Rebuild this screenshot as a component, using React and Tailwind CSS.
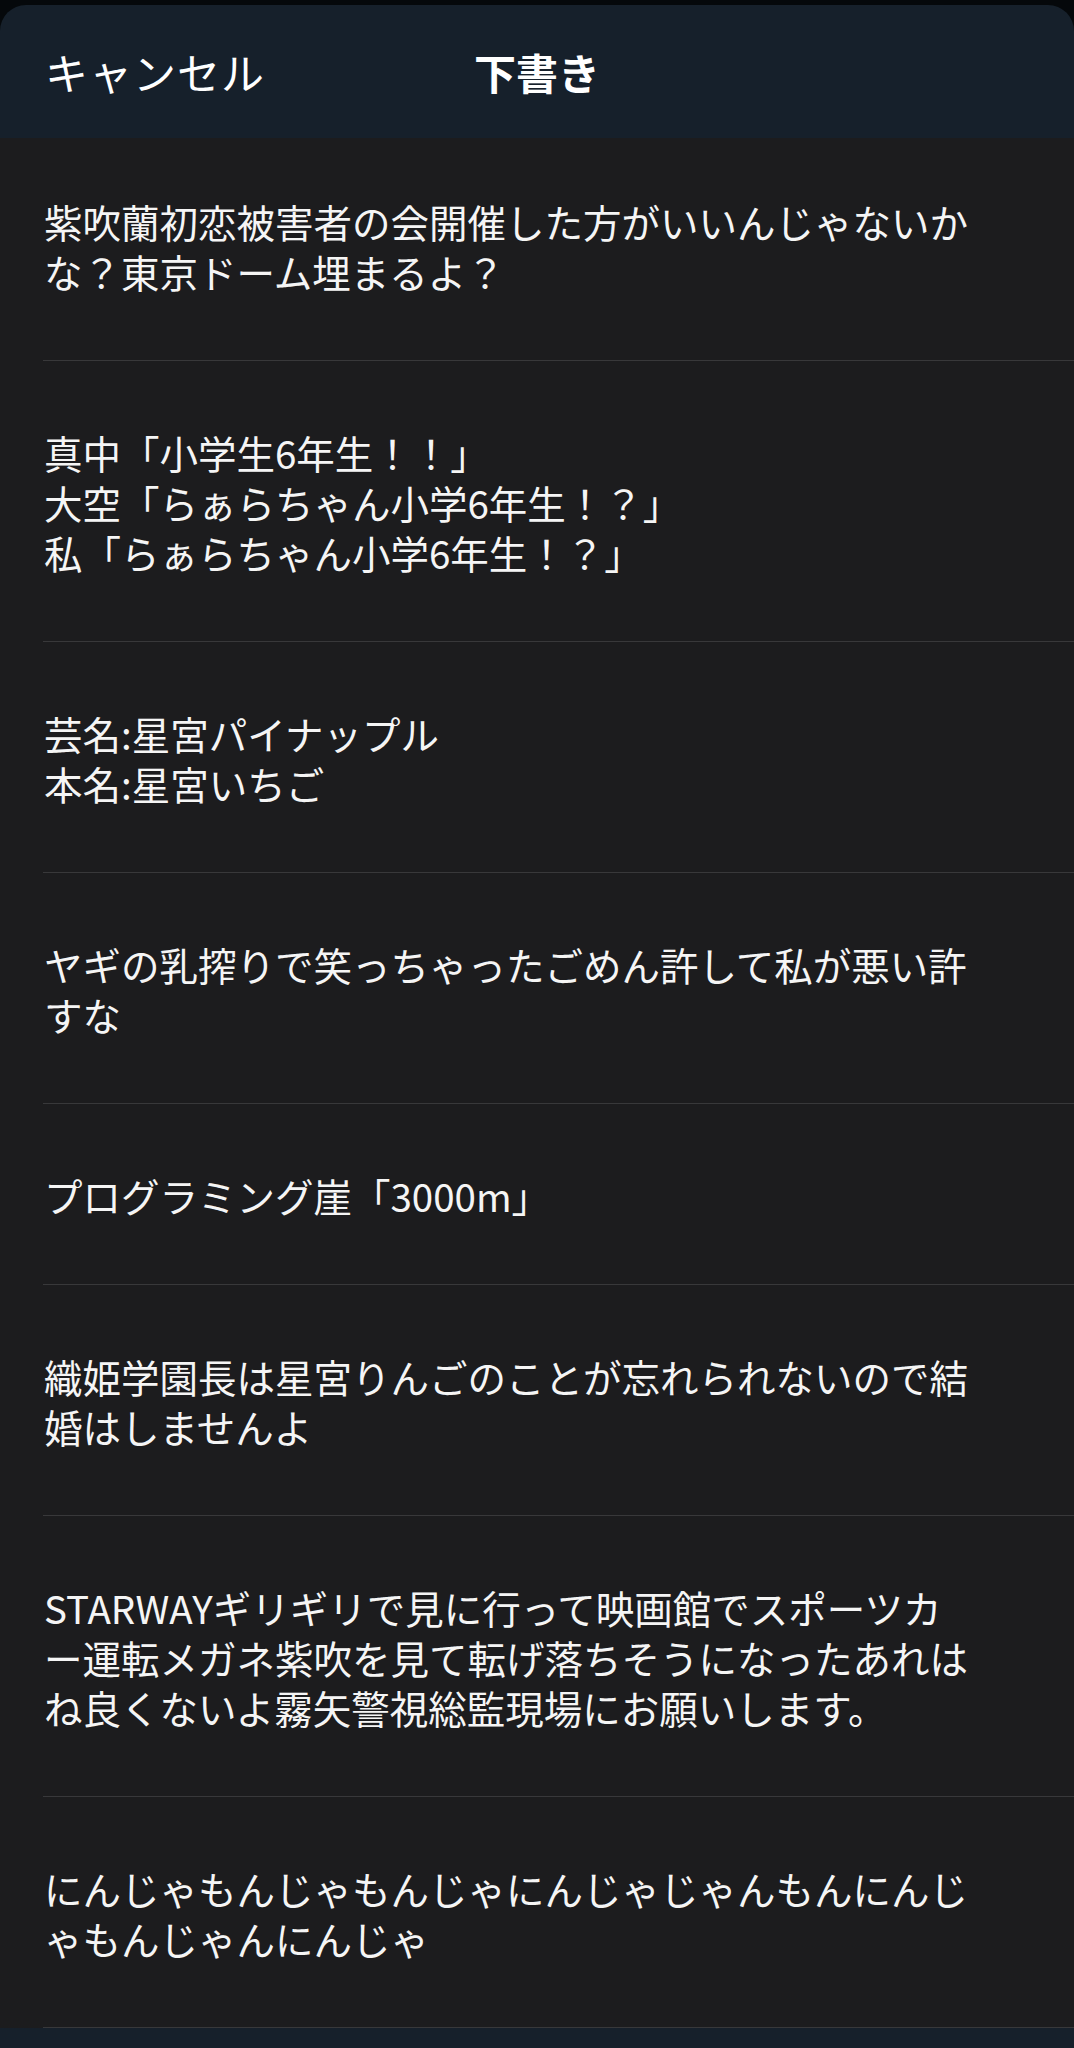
const drafts = [
  ["紫吹蘭初恋被害者の会開催した方がいいんじゃないか", "な？東京ドーム埋まるよ？"],
  ["真中「小学生6年生！！」", "大空「らぁらちゃん小学6年生！？」", "私「らぁらちゃん小学6年生！？」"],
  ["芸名:星宮パイナップル", "本名:星宮いちご"],
  ["ヤギの乳搾りで笑っちゃったごめん許して私が悪い許", "すな"],
  ["プログラミング崖「3000m」"],
  ["織姫学園長は星宮りんごのことが忘れられないので結", "婚はしませんよ"],
  [
    "STARWAYギリギリで見に行って映画館でスポーツカ",
    "ー運転メガネ紫吹を見て転げ落ちそうになったあれは",
    "ね良くないよ霧矢警視総監現場にお願いします。",
  ],
  ["にんじゃもんじゃもんじゃにんじゃじゃんもんにんじ", "ゃもんじゃんにんじゃ"],
];

function DraftRow({ lines, first }) {
  return (
    <div
      className={`ml-[43px] pl-[1px] pr-[40px] border-b border-[#38383a] ${first ? "pt-[58px]" : "pt-[66px]"} pb-[64px] cursor-pointer`}
    >
      <p className="whitespace-pre text-[38.5px] leading-[50px] text-[#f5f5f5]">
        {lines.join("\n")}
      </p>
    </div>
  );
}

export default function App() {
  return (
    <div className="h-[2048px] overflow-hidden bg-[#05080b] pt-[5px] flex flex-col font-['Noto_Sans_CJK_JP',sans-serif]">
      <header className="h-[133px] shrink-0 rounded-t-[26px] bg-[#16202b] grid grid-cols-[1fr_auto_1fr] items-center px-[45px]">
        <button className="justify-self-start text-[43px] tracking-[1px] text-white">キャンセル</button>
        <h1 className="text-[42px] font-bold text-white">下書き</h1>
        <div />
      </header>
      <main className="bg-[#1c1c1e]">
        {drafts.map((lines, i) => (
          <DraftRow key={i} lines={lines} first={i === 0} />
        ))}
      </main>
      <div className="flex-1 bg-[#16202b]" />
    </div>
  );
}
